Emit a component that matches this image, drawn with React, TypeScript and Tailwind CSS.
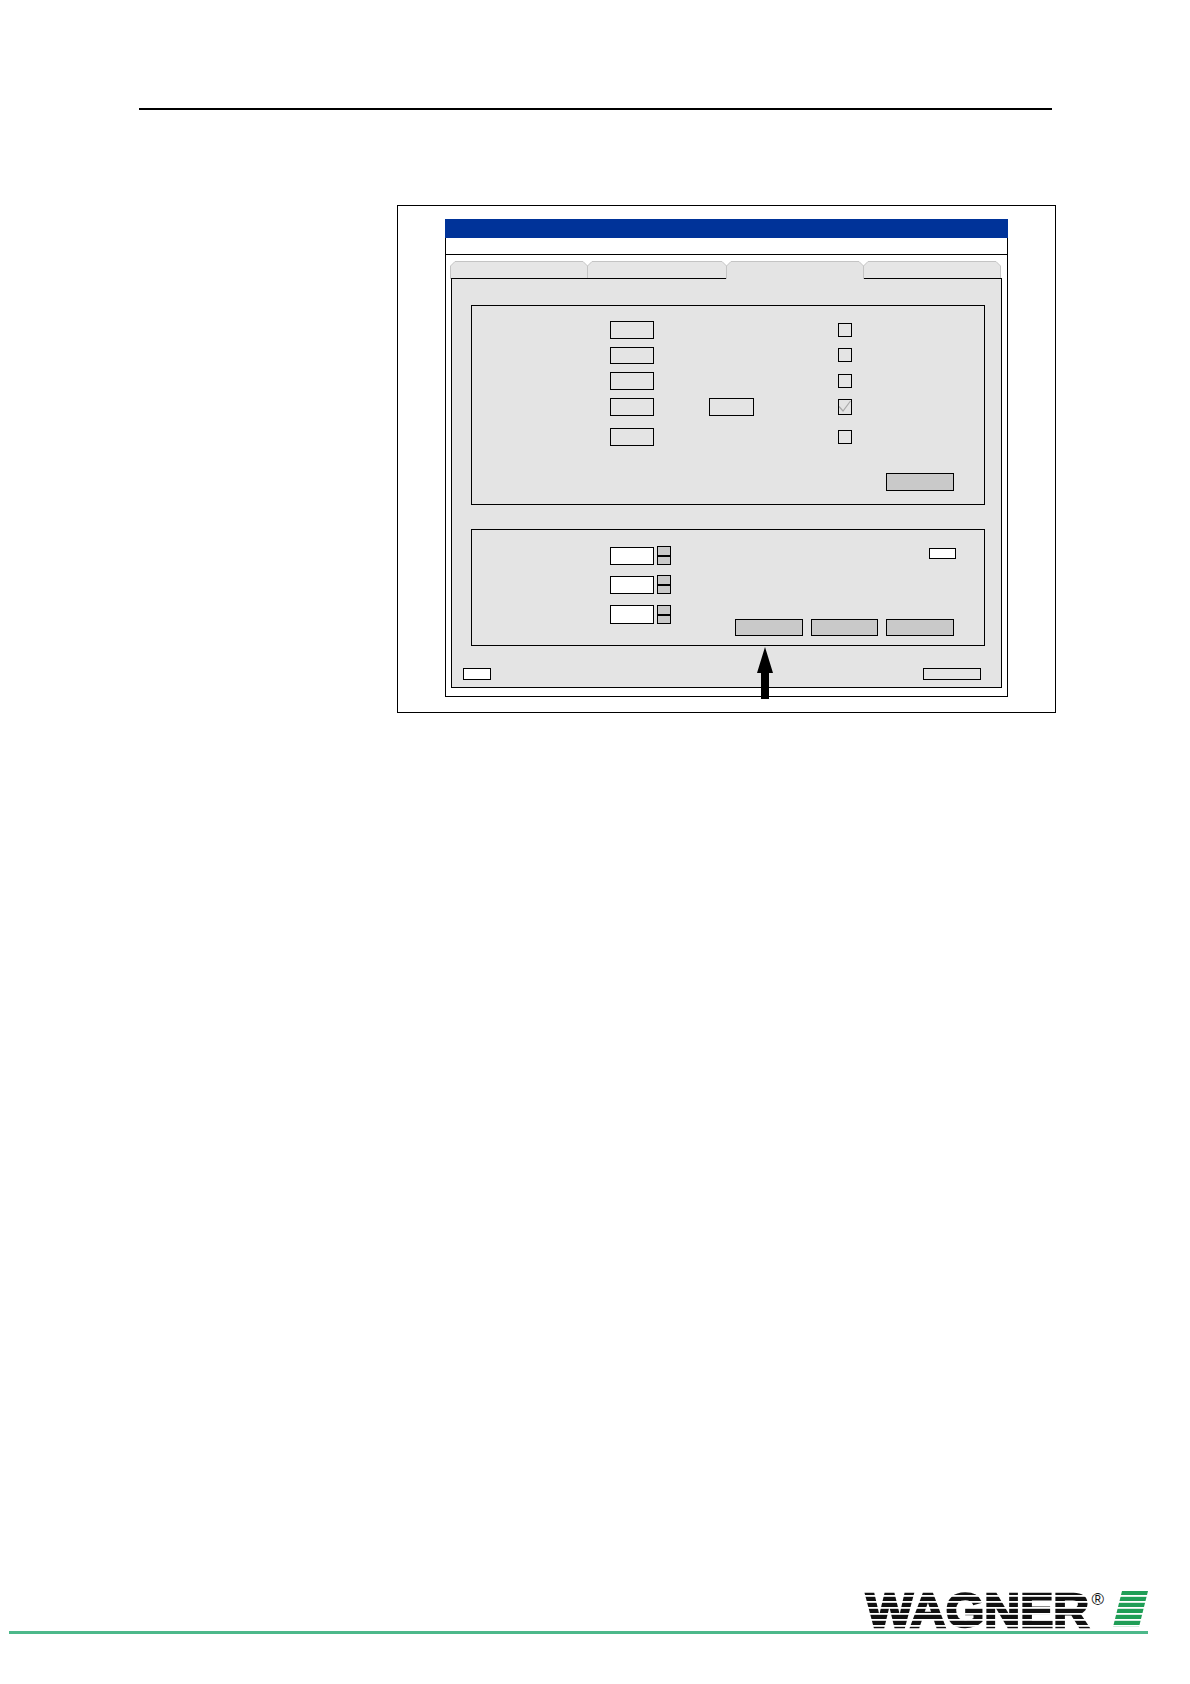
import React from 'react';

const Field: React.FC<{ white?: boolean; className?: string }> = ({ white, className = '' }) => (
  <div className={`border border-black ${white ? 'bg-white' : 'bg-[#e4e4e4]'} ${className}`} />
);

const CheckBox: React.FC<{ checked?: boolean; className?: string }> = ({ checked, className = '' }) => (
  <div className={`w-[14px] ${checked ? 'h-[16px]' : 'h-[14px]'} border border-black bg-[#e4e4e4] ${className}`}>
    {checked && (
      <svg viewBox="0 0 12 14" className="w-full h-full block">
        <path d="M0 6.5 L4 11 L11.5 1" fill="none" stroke="#a9a9a9" strokeWidth="1.2" />
      </svg>
    )}
  </div>
);

const ActionButton: React.FC<{ className?: string }> = ({ className = 'w-[68px] h-[18px]' }) => (
  <div className={`border border-black bg-[#c9c9c9] ${className}`} />
);

const Spinner: React.FC = () => (
  <div className="ml-[3px] w-[14px] h-[19px] border border-black bg-[#c9c9c9] shrink-0">
    <div className="h-[10px] border-b-2 border-black" />
  </div>
);

// tab outline has cut corners, open at the bottom
const Tab: React.FC<{ width: number; active?: boolean; first?: boolean }> = ({ width, active, first }) => {
  const r = width - 0.5;
  return (
    <svg
      width={width}
      height={18}
      className={`block shrink-0 ${first ? '' : '-ml-px'} ${active ? 'relative z-10' : ''}`}
    >
      <path d={`M0.5 18 V5 L5 0.5 H${r - 4.5} L${r} 5 V18 Z`} fill={active ? '#e4e4e4' : '#e6e6e6'} />
      <path d={`M0.5 18 V5 L5 0.5 H${r - 4.5} L${r} 5 V18`} fill="none" stroke="#c4c4c4" />
    </svg>
  );
};

const rows = [
  { gap: 'mt-0', h: 'h-[18px]' },
  { gap: 'mt-[8px]', h: 'h-[17px]', nudge: true },
  { gap: 'mt-[8px]', h: 'h-[18px]' },
  { gap: 'mt-[8px]', h: 'h-[18px]', second: true, checked: true },
  { gap: 'mt-[12px]', h: 'h-[18px]' },
];

const spinRows = [
  { gap: 'mt-0', h: 'h-[18px]' },
  { gap: 'mt-[11px]', h: 'h-[18px]' },
  { gap: 'mt-[11px]', h: 'h-[19px]' },
];

const stripes = [5, 11, 17, 23, 29, 35];

const Logo: React.FC = () => (
  <svg viewBox="0 0 282 38" className="w-[282px] h-[38px] block overflow-visible">
    <text
      x="0"
      y="36.5"
      fontFamily="'Liberation Sans', sans-serif"
      fontWeight="700"
      fontSize="49"
      textLength="223"
      lengthAdjust="spacingAndGlyphs"
      fill="#111"
      stroke="#111"
      strokeWidth="2.4"
    >
      WAGNER
    </text>
    {stripes.map((y) => (
      <rect key={y} x="-2" y={y} width="228" height="1.8" fill="#fff" />
    ))}
    <text x="225.5" y="15" fontFamily="'Liberation Sans', sans-serif" fontSize="17" fill="#111">
      ®
    </text>
    <polygon points="256,1 282,1 273,37 247,37" fill="#1f9e56" />
    {stripes.map((y) => (
      <rect key={y} x="245" y={y} width="38" height="1.8" fill="#fff" />
    ))}
  </svg>
);

export default function App() {
  return (
    <div className="relative w-[1190px] h-[1684px] bg-white flex flex-col">
      <div className="mt-[108px] ml-[139px] w-[913px] h-[2px] bg-black" />

      <div className="mt-[95px] ml-[397px] w-[659px] h-[508px] border border-black pt-[13px] pl-[47px]">
        <div className="relative w-[563px] h-[478px] flex flex-col">
          <div className="h-[19px] bg-[#003399]" />
          <div className="flex-1 border-x border-b border-black flex flex-col">
            <div className="h-[17px] border-b border-black bg-white" />

            <div className="pt-[6px] pl-[4px] flex">
              <Tab first width={138} />
              <Tab width={140} />
              <Tab active width={138} />
              <Tab width={138} />
            </div>

            <div className="ml-[5px] -mt-px w-[551px] h-[410px] border border-black bg-[#e4e4e4] flex flex-col">
              <div className="ml-[19px] mt-[26px] w-[514px] h-[200px] border border-black pt-[15px]">
                {rows.map((row, i) => (
                  <div key={i} className={`${row.gap} ${row.h} pl-[138px] flex items-center`}>
                    <Field className="w-[44px] h-full" />
                    <div className="w-[184px] h-full">
                      {row.second && <Field className="ml-[55px] w-[45px] h-full" />}
                    </div>
                    <CheckBox checked={row.checked} className={row.nudge ? '-mt-px' : ''} />
                  </div>
                ))}
                <div className="mt-[27px] pr-[30px] flex justify-end">
                  <ActionButton />
                </div>
              </div>

              <div className="ml-[19px] mt-[24px] w-[514px] h-[117px] border border-black flex">
                <div className="pl-[138px] pt-[17px] flex flex-col">
                  {spinRows.map((row, i) => (
                    <div key={i} className={`${row.gap} ${row.h} flex items-end`}>
                      <Field white className="w-[44px] h-full" />
                      <Spinner />
                    </div>
                  ))}
                </div>
                <div className="flex-1 pt-[18px] pr-[30px] flex flex-col items-end">
                  <div className="-mr-[2px] w-[27px] h-[11px] border border-black bg-white" />
                  <div className="mt-[60px] flex gap-[8px]">
                    <ActionButton className="w-[68px] h-[17px]" />
                    <ActionButton className="w-[67px] h-[17px]" />
                    <ActionButton className="w-[68px] h-[17px]" />
                  </div>
                </div>
              </div>

              <div className="mt-[22px] pl-[11px] pr-[20px] flex justify-between">
                <div className="w-[28px] h-[12px] border border-black bg-white" />
                <div className="w-[58px] h-[12px] border border-black bg-[#e4e4e4]" />
              </div>
            </div>
          </div>

          {/* arrow sits on top of the dialog */}
          <svg viewBox="0 0 16 52" className="absolute left-[312px] top-[428px] w-[16px] h-[52px] z-20">
            <polygon points="8,0 16,26 12,26 12,52 4,52 4,26 0,26" fill="#000" />
          </svg>
        </div>
      </div>

      <div className="mt-auto mb-[50px]">
        <div className="ml-[866px]">
          <Logo />
        </div>
        <div className="mt-[3px] ml-[9px] w-[1139px] h-[3px] bg-[#4db88a]" />
      </div>
    </div>
  );
}
